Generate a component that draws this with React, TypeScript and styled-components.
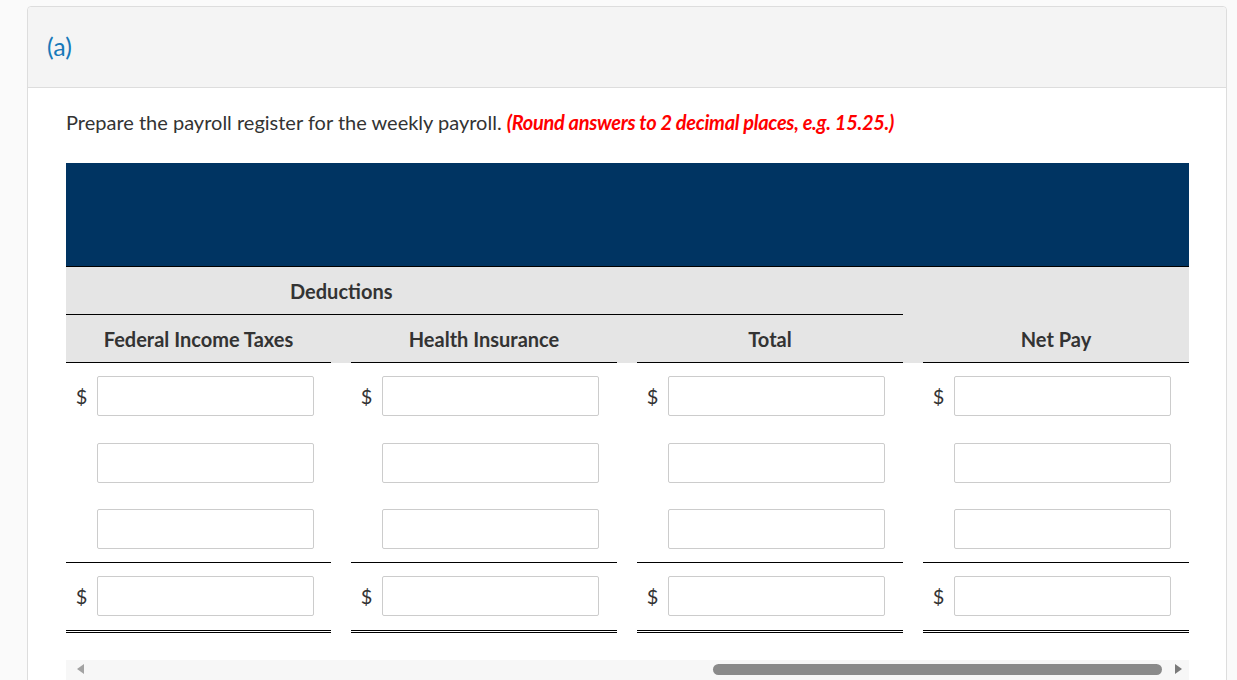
import React from 'react';
import styled, { createGlobalStyle } from 'styled-components';

const GlobalStyle = createGlobalStyle`
  html, body {
    margin: 0;
    padding: 0;
    background: #fafafa;
    font-family: Lato, "Open Sans", Arial, sans-serif;
    color: #333333;
  }
`;

const Page = styled.div`
  padding: 6px 10px 0 27px;
  height: 674px;
  overflow: hidden;
`;

const Card = styled.section`
  background: #ffffff;
  border: 1px solid #dddddd;
  border-radius: 4px 4px 0 0;
  min-height: 700px;
`;

const CardHeader = styled.header`
  height: 80px;
  display: flex;
  align-items: center;
  padding: 0 19px;
  background: #f4f4f4;
  border-bottom: 1px solid #dddddd;
  border-radius: 4px 4px 0 0;

  h2 {
    margin: 0 0 3px;
    font-size: 25px;
    font-weight: 400;
    color: #1779b9;
  }
`;

const CardBody = styled.div`
  padding: 19px 37px 0 38px;
`;

const Prompt = styled.p`
  margin: 0;
  font-size: 20px;
  line-height: 30px;
  color: #333333;

  em {
    font-style: italic;
    font-weight: 700;
    color: #ff0000;
    letter-spacing: -0.3px;
  }
`;

const Banner = styled.div`
  margin-top: 26px;
  height: 103px;
  background: #003462;
  border-bottom: 1px solid #000000;
`;

const HeadBlock = styled.div`
  display: grid;
  grid-template-columns: 265px repeat(3, 266px);
  grid-template-rows: 48px 48px;
  column-gap: 20px;
  background: #e5e5e5;
`;

const GroupCell = styled.div`
  grid-column: 1 / 4;
  grid-row: 1;
  display: flex;
  align-items: center;
  padding-left: 224px;
  border-bottom: 1px solid #000000;
  font-size: 20px;
  font-weight: 700;
  color: #333333;
`;

const ColHead = styled.div<{ $tall?: boolean }>`
  grid-row: ${({ $tall }) => ($tall ? '1 / 3' : '2')};
  display: flex;
  align-items: ${({ $tall }) => ($tall ? 'flex-end' : 'center')};
  justify-content: center;
  padding-bottom: ${({ $tall }) => ($tall ? '11px' : '0')};
  border-bottom: 1px solid #000000;
  font-size: 20px;
  font-weight: 700;
  color: #333333;
`;

const Row = styled.div`
  display: grid;
  grid-template-columns: 265px repeat(3, 266px);
  column-gap: 20px;
`;

const Cell = styled.div<{ $line?: 'single' | 'double' }>`
  display: flex;
  align-items: center;
  height: 40px;
  padding: 13px 0
    ${({ $line }) => ($line === 'double' ? '14px' : $line === 'single' ? '13px' : '13.5px')};
  border-bottom: ${({ $line }) =>
    $line === 'double' ? '3px double #000000' : $line === 'single' ? '1px solid #000000' : 'none'};
`;

const Dollar = styled.span`
  width: 31px;
  text-align: center;
  font-size: 20px;
  color: #333333;
`;

const Field = styled.input`
  box-sizing: border-box;
  width: 217px;
  height: 40px;
  border: 1px solid #cccccc;
  border-radius: 2px;
  background: #ffffff;
  font: inherit;
  font-size: 16px;
  padding: 0 8px;
  outline: none;
`;

const ScrollTrack = styled.div`
  margin-top: 27px;
  height: 20px;
  background: #f7f7f7;
  display: flex;
  align-items: flex-start;
  padding-top: 4px;
  box-sizing: border-box;
`;

const Arrow = styled.span<{ $dir: 'left' | 'right' }>`
  width: 0;
  height: 0;
  border-top: 5px solid transparent;
  border-bottom: 5px solid transparent;
  ${({ $dir }) =>
    $dir === 'left'
      ? 'border-right: 7px solid #a3a3a3; margin-left: 11px;'
      : 'border-left: 7px solid #7a7a7a; margin-left: 13px;'}
`;

const Thumb = styled.span`
  margin-left: 629px;
  width: 449px;
  height: 11px;
  border-radius: 6px;
  background: #8a8a8a;
`;

const columns = ['Federal Income Taxes', 'Health Insurance', 'Total', 'Net Pay'];

type RowSpec = { dollar: boolean; line?: 'single' | 'double' };

const rows: RowSpec[] = [
  { dollar: true },
  { dollar: false },
  { dollar: false, line: 'single' },
  { dollar: true, line: 'double' },
];

export default function App() {
  return (
    <>
      <GlobalStyle />
      <Page>
        <Card>
          <CardHeader>
            <h2>(a)</h2>
          </CardHeader>
          <CardBody>
            <Prompt>
              Prepare the payroll register for the weekly payroll.{' '}
              <em>(Round answers to 2 decimal places, e.g. 15.25.)</em>
            </Prompt>
            <Banner />
            <HeadBlock>
              <GroupCell>Deductions</GroupCell>
              {columns.map((name, i) => (
                <ColHead key={name} $tall={i === 3} style={{ gridColumn: i + 1 }}>
                  {name}
                </ColHead>
              ))}
            </HeadBlock>
            {rows.map((row, r) => (
              <Row key={r}>
                {columns.map((name) => (
                  <Cell key={name} $line={row.line}>
                    <Dollar>{row.dollar ? '$' : ''}</Dollar>
                    <Field aria-label={name} />
                  </Cell>
                ))}
              </Row>
            ))}
            <ScrollTrack>
              <Arrow $dir="left" />
              <Thumb />
              <Arrow $dir="right" />
            </ScrollTrack>
          </CardBody>
        </Card>
      </Page>
    </>
  );
}
